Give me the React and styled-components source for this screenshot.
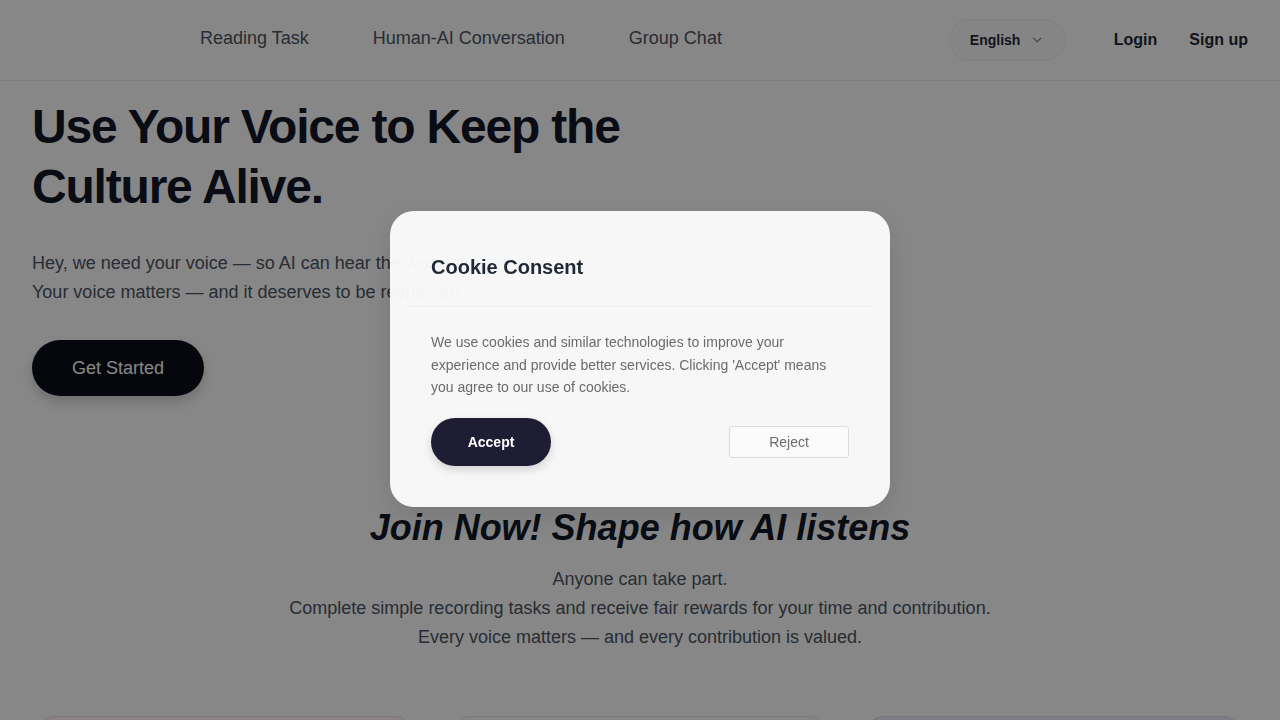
import React from 'react';
import styled, { createGlobalStyle } from 'styled-components';

const GlobalStyle = createGlobalStyle`
  * { box-sizing: border-box; }
  body {
    margin: 0;
    background: #ffffff;
    font-family: "Liberation Sans", Arial, sans-serif;
    color: #111827;
    overflow: hidden;
  }
`;

const Page = styled.div`
  width: 1280px;
  height: 720px;
  overflow: hidden;
  background: #ffffff;
`;

const Header = styled.header`
  height: 81px;
  display: flex;
  align-items: center;
  padding: 0 32px 0 200px;
  border-bottom: 1px solid #f1f2f4;
  background: #ffffff;
`;

const NavLinks = styled.nav`
  display: flex;
  gap: 64px;
  margin-top: -4px;
  a {
    font-size: 18px;
    color: #4b5563;
    text-decoration: none;
  }
`;

const HeaderRight = styled.div`
  margin-left: auto;
  display: flex;
  align-items: center;
`;

const LangPill = styled.button`
  display: flex;
  align-items: center;
  gap: 10px;
  width: 117px;
  height: 42px;
  padding: 0 20px;
  border: 1px solid #eceef1;
  border-radius: 21px;
  background: #fcfcfd;
  font-family: inherit;
  font-size: 14px;
  font-weight: 700;
  color: #1f2937;
  margin-right: 48px;
`;

const AuthLink = styled.a`
  font-size: 16px;
  font-weight: 700;
  color: #1f2937;
  text-decoration: none;
  margin-left: ${p => (p.$first ? '0' : '32px')};
`;

const Hero = styled.section`
  padding: 16px 32px 0;
`;

const HeroTitle = styled.h1`
  margin: 0;
  width: 640px;
  font-size: 48px;
  line-height: 60px;
  font-weight: 700;
  letter-spacing: -1.2px;
  color: #111827;
`;

const HeroText = styled.p`
  margin: 32px 0 0;
  font-size: 18px;
  line-height: 29px;
  color: #4b5563;
`;

const PrimaryButton = styled.button`
  margin-top: 33px;
  height: 56px;
  padding: 0 40px;
  border: none;
  border-radius: 28px;
  background: #0b0f19;
  color: #ffffff;
  font-family: inherit;
  font-size: 18px;
  box-shadow: 0 6px 12px rgba(0, 0, 0, 0.18);
`;

const Join = styled.section`
  margin-top: 110px;
  text-align: center;
`;

const JoinTitle = styled.h2`
  margin: 0;
  font-size: 36px;
  line-height: 44px;
  font-style: italic;
  font-weight: 700;
  color: #111827;
`;

const JoinText = styled.p`
  margin: 15px 0 0;
  font-size: 18px;
  line-height: 29px;
  color: #4b5563;
`;

const Cards = styled.div`
  display: grid;
  grid-template-columns: repeat(3, 373px);
  gap: 41px;
  padding: 0 39px;
  margin-top: 64px;
`;

const Card = styled.div`
  height: 120px;
  border-radius: 16px;
  border: 1px solid ${p => p.$border};
  background: ${p => p.$bg};
`;

const Overlay = styled.div`
  position: fixed;
  inset: 0;
  background: rgba(0, 0, 0, 0.47);
  display: flex;
  align-items: center;
  justify-content: center;
`;

const Modal = styled.div`
  width: 500px;
  margin-top: -2px;
  padding: 16px;
  border-radius: 24px;
  background: rgba(252, 252, 252, 0.96);
  box-shadow: 0 10px 30px rgba(0, 0, 0, 0.12);
`;

const ModalHeader = styled.div`
  padding: 25px 25px 24px;
  border-bottom: 1px solid #efeff1;
`;

const ModalTitle = styled.h3`
  margin: 0;
  font-size: 20px;
  line-height: 30px;
  font-weight: 700;
  color: #1f2937;
`;

const ModalBody = styled.div`
  padding: 24px 25px 25px;
`;

const ModalText = styled.p`
  margin: 0;
  font-size: 14px;
  line-height: 22.5px;
  color: #6b6b6b;
`;

const ButtonRow = styled.div`
  margin-top: 19px;
  display: flex;
  align-items: center;
  justify-content: space-between;
`;

const AcceptButton = styled.button`
  width: 120px;
  height: 48px;
  border: none;
  border-radius: 24px;
  background: #1f1d33;
  color: #ffffff;
  font-family: inherit;
  font-size: 14px;
  font-weight: 700;
  box-shadow: 0 4px 10px rgba(0, 0, 0, 0.15);
`;

const RejectButton = styled.button`
  width: 120px;
  height: 32px;
  border: 1px solid #dcdcdf;
  border-radius: 3px;
  background: #fbfbfb;
  color: #6b6b6b;
  font-family: inherit;
  font-size: 14px;
`;

const Chevron = () => (
  <svg width="16" height="16" viewBox="0 0 24 24" fill="none" stroke="#6b7280" strokeWidth="1.8" strokeLinecap="round" strokeLinejoin="round">
    <path d="m6 9 6 6 6-6" />
  </svg>
);

const App = () => {
  return (
    <Page>
      <GlobalStyle />
      <Header>
        <NavLinks>
          <a href="#">Reading Task</a>
          <a href="#">Human-AI Conversation</a>
          <a href="#">Group Chat</a>
        </NavLinks>
        <HeaderRight>
          <LangPill>
            English <Chevron />
          </LangPill>
          <AuthLink href="#" $first>Login</AuthLink>
          <AuthLink href="#">Sign up</AuthLink>
        </HeaderRight>
      </Header>

      <Hero>
        <HeroTitle>Use Your Voice to Keep the Culture Alive.</HeroTitle>
        <HeroText>
          Hey, we need your voice — so AI can hear the world around us.
          <br />
          Your voice matters — and it deserves to be respected.
        </HeroText>
        <PrimaryButton>Get Started</PrimaryButton>
      </Hero>

      <Join>
        <JoinTitle>Join Now! Shape how AI listens</JoinTitle>
        <JoinText>
          Anyone can take part.
          <br />
          Complete simple recording tasks and receive fair rewards for your time and contribution.
          <br />
          Every voice matters — and every contribution is valued.
        </JoinText>
      </Join>

      <Cards>
        <Card $bg="#fff7f6" $border="#f3e3e1" />
        <Card $bg="#f8f9fc" $border="#e6e8ee" />
        <Card $bg="#eceef3" $border="#d9dce3" />
      </Cards>

      <Overlay>
        <Modal>
          <ModalHeader>
            <ModalTitle>Cookie Consent</ModalTitle>
          </ModalHeader>
          <ModalBody>
            <ModalText>
              We use cookies and similar technologies to improve your experience and provide better
              services. Clicking 'Accept' means you agree to our use of cookies.
            </ModalText>
            <ButtonRow>
              <AcceptButton>Accept</AcceptButton>
              <RejectButton>Reject</RejectButton>
            </ButtonRow>
          </ModalBody>
        </Modal>
      </Overlay>
    </Page>
  );
};

export default App;
